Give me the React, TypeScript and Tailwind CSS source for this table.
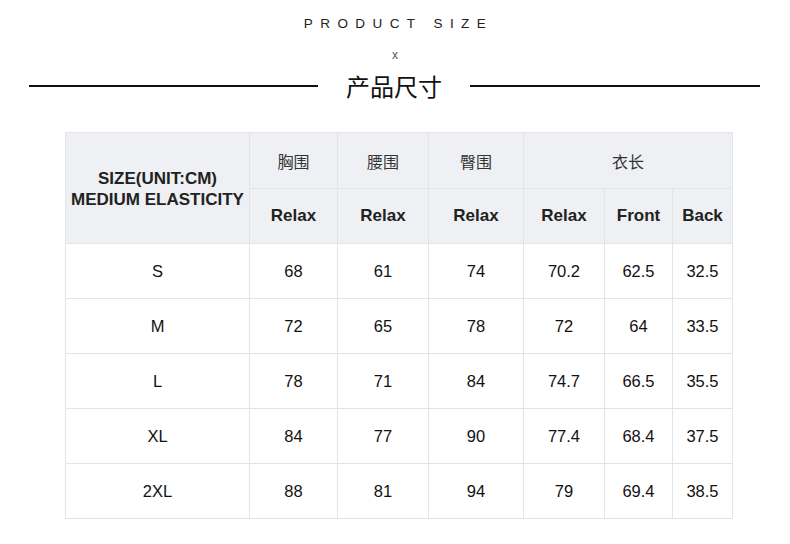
const cols = ['w-[184px]', 'w-[88px]', 'w-[91px]', 'w-[95px]', 'w-[81px]', 'w-[68px]', 'w-[60px]'];

const rows = [
  ['S', '68', '61', '74', '70.2', '62.5', '32.5'],
  ['M', '72', '65', '78', '72', '64', '33.5'],
  ['L', '78', '71', '84', '74.7', '66.5', '35.5'],
  ['XL', '84', '77', '90', '77.4', '68.4', '37.5'],
  ['2XL', '88', '81', '94', '79', '69.4', '38.5'],
];

const cell = 'border border-[#e2e4e6] text-center align-middle p-0';
const zh = 'font-["Noto_Sans_CJK_SC",serif] text-[16px] text-[#333] font-normal';

export default function App() {
  return (
    <div className="w-[790px] h-[544px] bg-white font-['Liberation_Sans',Arial,sans-serif] text-[#1a1a1a]">
      <div className="pt-[16px] text-center text-[13.5px] tracking-[0.55em] pl-[7px] leading-[16px] text-[#222]">PRODUCT SIZE</div>
      <div className="mt-[17px] text-center text-[12px] leading-[12px] text-[#555]">x</div>
      <div className="mt-[7px] flex items-center h-[36px]">
        <div className="ml-[29px] w-[289px] h-[2px] bg-[#111]" />
        <div className="flex-1 text-center font-['Noto_Sans_CJK_SC',sans-serif] text-[24px] leading-[36px] text-[#111]">产品尺寸</div>
        <div className="mr-[30px] w-[290px] h-[2px] bg-[#111]" />
      </div>
      <div className="mt-[28px] ml-[65px]">
        <table className="border-collapse table-fixed w-[667px]">
          <colgroup>
            {cols.map((c, i) => <col key={i} className={c} />)}
          </colgroup>
          <thead className="bg-[#eef0f3]">
            <tr className="h-[56px]">
              <th rowSpan={2} className={`${cell} text-[17px] font-bold leading-[21px] text-[#222] pt-[2px]`}>
                SIZE(UNIT:CM)<br />MEDIUM ELASTICITY
              </th>
              <th className={`${cell} ${zh}`}>胸围</th>
              <th className={`${cell} ${zh}`}>腰围</th>
              <th className={`${cell} ${zh}`}>臀围</th>
              <th colSpan={3} className={`${cell} ${zh}`}>衣长</th>
            </tr>
            <tr className="h-[55px]">
              {['Relax', 'Relax', 'Relax', 'Relax', 'Front', 'Back'].map((t, i) => (
                <th key={i} className={`${cell} text-[17px] font-bold text-[#222]`}>{t}</th>
              ))}
            </tr>
          </thead>
          <tbody>
            {rows.map((r) => (
              <tr key={r[0]} className="h-[55px]">
                {r.map((v, i) => (
                  <td key={i} className={`${cell} text-[16.5px] text-[#111]`}>{v}</td>
                ))}
              </tr>
            ))}
          </tbody>
        </table>
      </div>
    </div>
  );
}
